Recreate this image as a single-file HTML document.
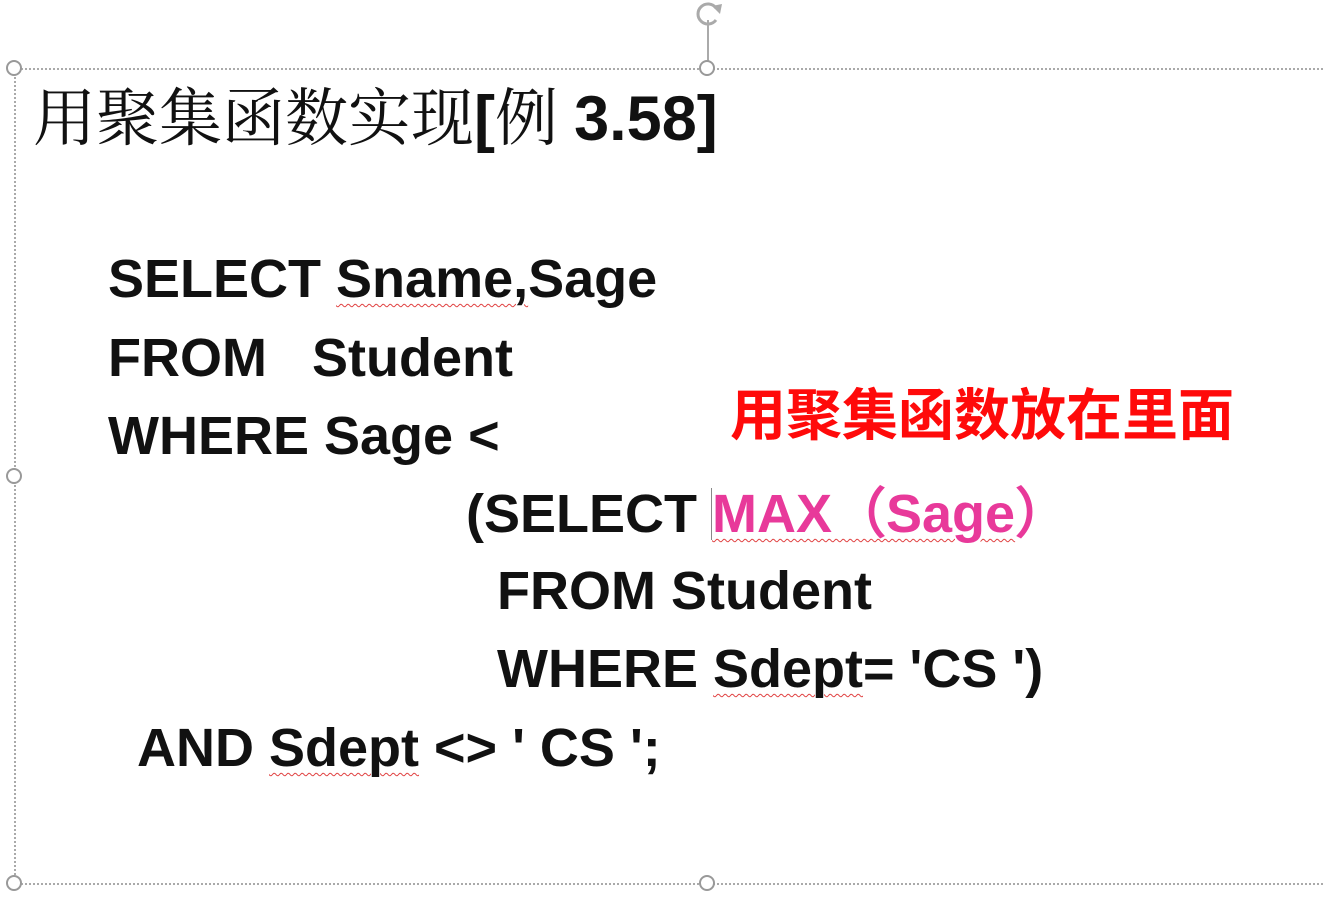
<!DOCTYPE html>
<html><head><meta charset="utf-8"><style>
html,body{margin:0;padding:0;background:#fff;width:1324px;height:904px;overflow:hidden;position:relative}
.t{position:absolute;white-space:pre;font-family:"Liberation Sans",Arial,sans-serif;font-weight:bold;font-size:54px;line-height:1;color:#111}
.w{text-decoration:underline wavy #e04040;text-decoration-thickness:1px;text-underline-offset:6px}
.p{color:#e8399a}
.h{position:absolute;width:16px;height:16px;border:2px solid #999;border-radius:50%;background:#fff;box-sizing:border-box}
</style></head><body>
<div style="position:absolute;left:14px;top:68px;width:1320px;border-top:2px dotted #aaa"></div>
<div style="position:absolute;left:14px;top:883px;width:1320px;border-top:2px dotted #aaa"></div>
<div style="position:absolute;left:14px;top:68px;height:815px;border-left:2px dotted #aaa"></div>
<div style="position:absolute;left:707px;top:20px;height:46px;border-left:2px solid #aaa"></div>
<svg style="position:absolute;left:690px;top:0" width="40" height="28"><path d="M26 8 A10 10 0 1 0 26 20" fill="none" stroke="#aaa" stroke-width="3"/><path d="M22 6 L32 4 L30 14 Z" fill="#aaa"/></svg>
<div class="h" style="left:6px;top:60px"></div>
<div class="h" style="left:699px;top:60px"></div>
<div class="h" style="left:6px;top:468px"></div>
<div class="h" style="left:6px;top:875px"></div>
<div class="h" style="left:699px;top:875px"></div>

<div style="position:absolute;left:33px;top:82px;font-size:63px;line-height:1;white-space:pre;color:#111;font-family:'Noto Serif CJK SC',serif">用聚集函数实现<span style="font-family:'Liberation Sans',sans-serif;font-weight:bold">[</span>例 <span style="font-family:'Liberation Sans',sans-serif;font-weight:bold">3.58]</span></div>

<div class="t" style="left:108px;top:252px">SELECT <span class="w">Sname,</span>Sage</div>
<div class="t" style="left:108px;top:331px">FROM   Student</div>
<div class="t" style="left:108px;top:409px">WHERE Sage &lt;</div>
<div class="t" style="left:466px;top:487px">(SELECT <span class="p w">MAX（Sage</span><span class="p">）</span></div>
<div style="position:absolute;left:711px;top:488px;height:52px;border-left:1px solid #888"></div>
<div class="t" style="left:497px;top:564px">FROM Student</div>
<div class="t" style="left:497px;top:642px">WHERE <span class="w">Sdept</span>= 'CS ')</div>
<div class="t" style="left:137px;top:721px">AND <span class="w">Sdept</span> &lt;&gt; ' CS ';</div>

<div style="position:absolute;left:730px;top:384px;font-size:56px;line-height:1;font-weight:bold;color:#ff0a0a;white-space:pre;font-family:'Noto Sans CJK SC',sans-serif">用聚集函数放在里面</div>
</body></html>
